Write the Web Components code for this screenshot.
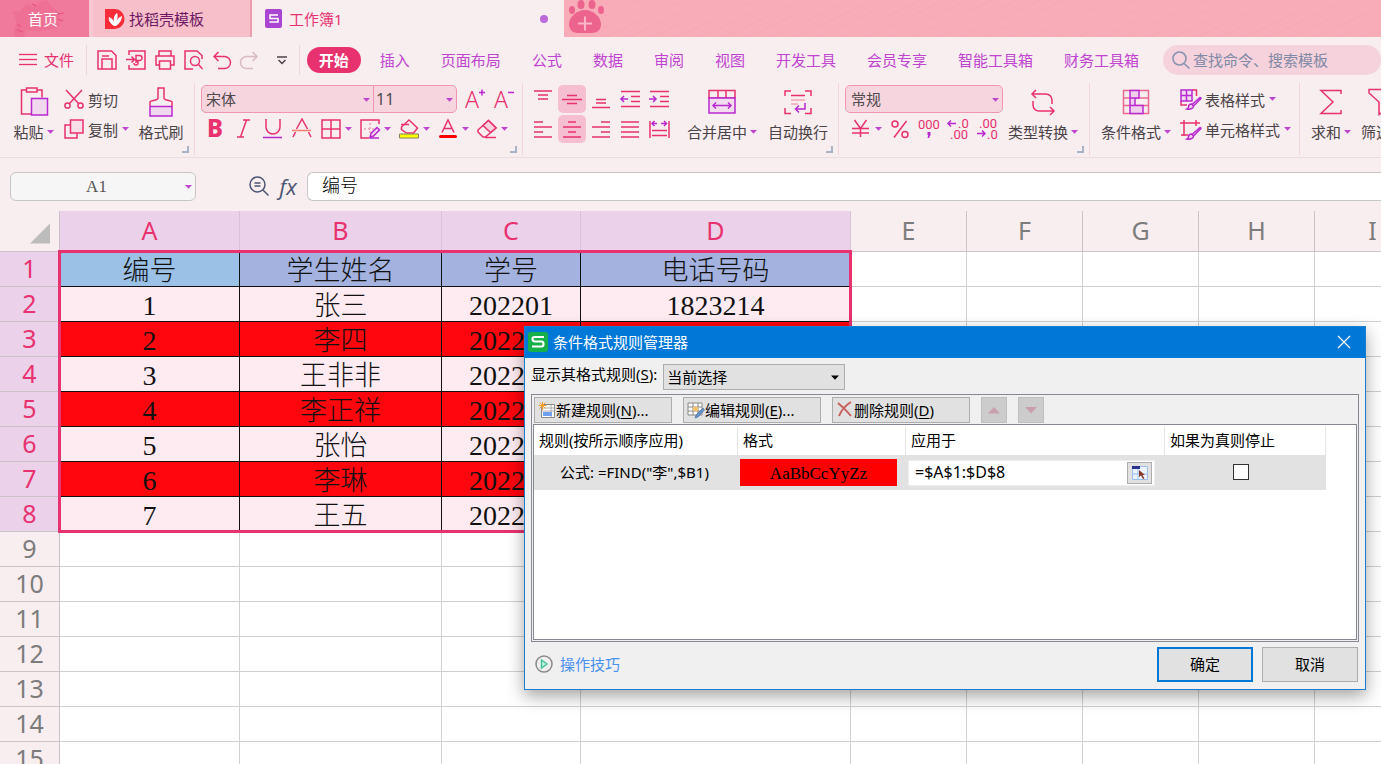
<!DOCTYPE html>
<html lang="zh-CN">
<head>
<meta charset="utf-8">
<title>工作簿1</title>
<style>
  html, body { height: 100%; }
  body { margin: 0; overflow: hidden; background: #f8edef; color: #4a4347;
    font: 15px/20px "Noto Sans", "Noto Sans CJK SC", sans-serif; }
</style>
</head>
<body>
<sheet-app></sheet-app>
<script>
const P = '#e8316f', V = '#b829cf';
const BASE = `
  *, *::before { box-sizing: border-box; }
  :host { display: block; }
  button, input, select { font: inherit; color: inherit; margin: 0; padding: 0; border: 0; background: none; border-radius: 0; }
  button { cursor: pointer; white-space: nowrap; }
  select { appearance: none; }
  a { text-decoration: none; }
  u { text-underline-offset: 2px; }
`;
function define(name, css, html) {
  const tpl = document.createElement('template');
  tpl.innerHTML = `<style>${BASE}${css}</style>${html}`;
  customElements.define(name, class extends HTMLElement {
    constructor() {
      super();
      this.attachShadow({ mode: 'open' }).append(tpl.content.cloneNode(true));
    }
  });
}

/* Icon set: [width, height, markup]. Default stroke is the accent pink. */
const lines = (...l) => l.map(([x1, x2, y]) => `<path d="M${x1} ${y}H${x2}"/>`).join('');
const v = s => `<g stroke="${V}">${s}</g>`;
const glyph = (s, x, y, size, extra = '') => `<text x="${x}" y="${y}" font-size="${size}" stroke="none" fill="${P}" ${extra}>${s}</text>`;
const brush = `<path d="M20 8.500l-8 7 1.500 1.500L21 9.500c0-1-.5-1-1-1z" fill="#f3d3ee"/><path d="M11.500 15c-2 0-3 1-3 3 0 1-.5 1.500-1.500 2 3 .5 6.500 0 6.500-3z" fill="#f3d3ee"/>`;
const ICONS = {
  caret: [7, 4, `<path d="M0 0h7L3.500 3.800z" fill="#c044d0" stroke="none"/>`],
  darkcaret: [8, 5, `<path d="M0 .5h8L4 4.800z" fill="#000" stroke="none"/>`],
  menu: [18, 14, `<g stroke-width="1.300">${lines([0, 18, 1.5], [0, 18, 6.5], [0, 18, 11.5])}</g>`],
  save: [20, 20, `<path d="M1 1h13.500L19 5.500V19H1zM5 19V9h10v10M5 6h7"/>`],
  exportpdf: [20, 20, `<path d="M3 5V1h16v18H3v-4M0 9.500h8M5.500 6.500l3 3-3 3M10 13V5.500h3.500a2.500 2.500 0 010 5H10M10 11a2 2 0 11-2 2"/>`],
  print: [20, 20, `<path d="M4 6V1h12v5M4 15H1V6h18v9h-3M4.500 11h11v8h-11z"/>`],
  preview: [20, 20, `<path d="M9 19H1V1h12l5 4.500V9"/><circle cx="11" cy="11" r="4.500"/><path d="M14.500 14.500L18.500 19"/>`],
  undo: [18, 19, `<path d="M5.500 1L1 5.500 5.500 10M1 5.500h10.500a5.800 5.800 0 010 12H5"/>`],
  redo: [18, 19, `<path stroke="#d9b9c4" d="M12.500 1L17 5.500 12.500 10M17 5.500H6.500a5.800 5.800 0 000 12H13"/>`],
  more: [10, 9, `<path stroke="#4a4347" d="M0 1h10M1.500 4l3.500 3.500L8.500 4"/>`],
  search: [20, 20, `<g stroke="#8794b0" stroke-width="1.600"><circle cx="8.500" cy="8.500" r="6.500"/><path d="M13 13.500l5.500 5"/></g>`],
  paste: [28, 30, `<path d="M6 3H1.500v24H11M17 3h5v7.500M6.500 1h10.500v4H6.500z"/>${v('<path d="M11.500 11.500h16V28h-16z" fill="#f0d9ee"/>')}`],
  cut: [20, 20, `<path d="M2 1l12.500 13.500M18 1L5.500 14.500"/><circle cx="3.500" cy="16.500" r="2.600"/><circle cx="16.500" cy="16.500" r="2.600"/>`],
  copy: [20, 20, `<path d="M6.500 1h12.500v13H6.500z" fill="#f9dfe8"/><path d="M6 6H1v13h12v-4.500"/>`],
  painter: [24, 30, `<path d="M1 19v-4c0-2 8-1 8-4V1h6v10c0 3 8 2 8 4v4"/>${v('<path d="M1 19.500h22V29H1z" fill="#f0d9ee"/>')}`],
  fontup: [20, 22, glyph('A', 0, 20, 23, 'font-weight="300"') + v('<path d="M14 4.500h6M17 1.500v6"/>')],
  fontdown: [20, 22, glyph('A', 0, 20, 23, 'font-weight="300"') + v('<path d="M14 4.500h6"/>')],
  bold: [20, 22, glyph('B', 2, 19, 24, 'font-weight="800" font-family="Noto Sans"')],
  italic: [20, 22, `<path d="M9 2h7M3 19h7M12.500 2l-6 17"/>`],
  underline: [20, 22, `<path d="M3 1v8a7 7 0 0014 0V1"/>${v('<path d="M0 19.500h19"/>')}`],
  strike: [20, 22, `<path d="M4.500 11L10 1l5.500 10M3.500 14L1 19M16.500 14l2.500 5"/><path stroke="#f5806f" d="M0 12.500h19"/>`],
  borders: [20, 20, `<path d="M1 1h18v18H1zM10 1v18M1 10h18"/>`],
  drawborder: [20, 20, `<path d="M19 5V1H1v18h8"/><path stroke="#e7a1bb" stroke-dasharray="2 2" d="M10 4v12M4 10h12"/>${v('<path d="M10 18.500l1-4 6-6 2.500 2.500-6 6z" fill="#f3d3ee"/><path d="M10 19h9"/>')}`],
  fill: [20, 20, `<path d="M10 1L2.500 8v2.500l5 3.500h7l4-5zM2 5.500h8"/><path d="M.5 15h19v4H.5z" fill="#ff0" stroke="#83825c" stroke-width="1"/>`],
  fontcolor: [20, 20, `<path d="M4 13.500L10 1l6 12.500M6 9.500h8"/><path d="M2.500 17.500h15" stroke="red" stroke-width="3" stroke-linecap="round"/>`],
  eraser: [20, 20, `<path d="M1 11L11.500 1.500 19 9 8.500 18H6L1 13z"/><path d="M6 6.500l7.500 7L19 9l-7.500-7.500z" fill="#f7d2de"/><path d="M8 18.500h11"/>`],
  top: [20, 20, lines([1, 19, 2], [5, 15, 6], [5, 15, 10])],
  middle: [20, 20, lines([5, 15, 6.5], [0, 20, 10.5], [5, 15, 14.5])],
  bottom: [20, 20, lines([5, 15, 10.5], [5, 15, 14], [1, 19, 18.5])],
  outdent: [20, 20, lines([1, 20, 2.5], [11, 20, 7.5], [11, 20, 12.5], [1, 20, 17.5]) + v('<path d="M1 10h7M4 7l-3 3 3 3"/>')],
  indent: [20, 20, lines([1, 20, 2.5], [11, 20, 7.5], [11, 20, 12.5], [1, 20, 17.5]) + v('<path d="M0 10h7M4 7l3 3-3 3"/>')],
  left: [20, 20, lines([1, 10, 3], [1, 19, 8], [1, 10, 13], [1, 19, 18])],
  center: [20, 20, lines([6, 14, 3], [1, 19, 8], [6, 14, 13], [1, 19, 18])],
  right: [20, 20, lines([10, 19, 3], [1, 19, 8], [10, 19, 13], [1, 19, 18])],
  justify: [20, 20, lines([1, 19, 3], [1, 19, 8], [1, 19, 13], [1, 19, 18])],
  distribute: [20, 20, `<path d="M1 2v17M20 2v17M3 11.500h15M3 16.500h15"/>` + v('<path d="M3 4.500h5M5.500 2L3 4.500 5.500 7M12 4.500h5M15 2l2.500 2.500L15 7"/>')],
  merge: [28, 26, `<path d="M1 1.500h26V9H1zM10 1.500V9M18 1.500V9"/>${v('<path d="M1 9h26v15H1z" fill="#f3dcf0"/><path d="M5 16.500h18M8 13.500l-3 3 3 3M20 13.500l3 3-3 3"/>')}`],
  wrap: [28, 26, `<path d="M1 7V2h6M21 2h6v5M1 19v5.500h6M21 24.500h6V19M7 6.500h14"/><path stroke="#f2a5b8" d="M7 11h14M7 15h7"/>${v('<path d="M21 14v6H11.500M15 16.500L11.500 20l3.500 3.500"/>')}`],
  yen: [20, 20, `<path d="M3.500 1l6 8.500 6-8.500M9.500 9.500V18M1 9.500h17M1 14h17"/>`],
  percent: [20, 20, `<circle cx="5" cy="5" r="3"/><circle cx="15" cy="15.500" r="3"/><path d="M16.500 2L4 18.500"/>`],
  thousands: [22, 22, glyph('000', 0, 11, 13, 'font-family="Roboto"') + `<path d="M9.500 14h3v3l-1.500 3h-1.500l.8-3h-.8z" fill="${V}" stroke="none"/>`],
  moredec: [22, 22, glyph('.0', 11, 10, 13, 'font-family="Roboto"') + glyph('.00', 3, 21, 13, 'font-family="Roboto"') + v('<path d="M1 5.500h8M4 2.500l-3 3 3 3"/>')],
  lessdec: [22, 22, glyph('.00', 3, 10, 13, 'font-family="Roboto"') + glyph('.0', 11, 21, 13, 'font-family="Roboto"') + v('<path d="M1 15.500h8M6 12.500l3 3-3 3"/>')],
  convert: [26, 26, `<path d="M6 1L2 5l4 4M2 5h14a6 6 0 016 6v4M3 12v4a6 6 0 006 6h15M20 18l4 4-4 4"/>`],
  condfmt: [28, 26, `<path d="M1.500 1.500h25v23h-25zM1.500 9h25M1.500 16.500h25" stroke="#ea6a94"/>${v('<path d="M8 1.500h9V9H8zM8 9h5v7.500H8zM8 16.500h13v8H8z" fill="#f0cfec"/>')}`],
  tablestyle: [21, 21, `<path d="M12 1h4.500v6M1 12v4h6"/>${v('<path d="M1 1h11v11H1zM1 6.500h11M6.500 1v11" fill="#f3dcf0"/>' + brush)}`],
  cellstyle: [21, 21, `<path d="M4 1v16M0 4h20M16 1v6M1 16h7"/>${v(brush)}`],
  sum: [24, 26, `<path d="M22 5V1.500H2L14 13 2 24.500h20V21"/>`],
  filter: [26, 28, `<path d="M1 1.500h24V5L16 14v9l-5 3.500V14L1 5z"/>`],
  corner: [7, 7, `<path d="M6 0v6H0" stroke="#a9b3c6" stroke-width="2"/>`],
  zoomfx: [20, 20, `<g stroke="#4b5674"><circle cx="8.500" cy="8.500" r="7.500"/><path d="M14 14l5.500 5.500M5.500 7h6M5.500 10h6"/></g>`],
  docer: [20, 20, `<path d="M0 0h10a9.500 10 0 010 20H0z" fill="#fb2b38" stroke="none"/><path d="M9 17C5 14 3 11 4 8c2 1 4 2 5 5-.5-4 0-7 3-9 1 2 1 5-1 9 1-3 3-5 6-6 0 4-3 8-6 10z" fill="#fff" stroke="none"/>`],
  book: [18, 20, `<rect width="17" height="19" rx="2" fill="#aa45d3" stroke="none"/><path d="M13 6H5v3.500h8V13H4.500" stroke="#fff"/>`],
  paw: [36, 34, `<g fill="#ec638e" stroke="none"><ellipse cx="4" cy="10" rx="3" ry="4"/><ellipse cx="13" cy="4.500" rx="3.500" ry="4.500"/><ellipse cx="24" cy="4.500" rx="3.500" ry="4.500"/><ellipse cx="33" cy="10" rx="3" ry="4"/><path d="M17 10c8 0 16 7 16 14 0 6-4 9-9 9H10c-6 0-9-4-9-9 0-7 8-14 16-14z"/></g><path d="M10 23.500h14M17 16.500v14" stroke="#f8b6c6" stroke-width="2"/>`],
  cat: [64, 37, `<g fill="#ed5f8b" stroke="none" opacity=".35"><path d="M2 12l8-1 6-7 7 3 8-6 6-1 6 8c6 2 7 8 7 14s-4 7-12 8c-8 2-20 1-26-2C5 24 6 16 2 12z"/><path d="M10 20c-4 4-8 10-5 17h10c-2-5 2-8 7-9z"/></g><path d="M48 14l6-1M48 19l5 2M7 30l6 2M7 24l4 3M22 4l4 2" stroke="#e85a86"/>`],
  app: [20, 20, `<rect width="20" height="20" rx="3" fill="#16b04a" stroke="none"/><path d="M16 5H6.500Q4.500 5 4.500 7t2 2.500h7q2 0 2 2.500t-2 2.500H4" stroke="#fff" stroke-width="2.200"/>`],
  close: [12, 12, `<path d="M0 0l12 12M12 0L0 12" stroke="#fff" stroke-width="1.200"/>`],
  newrule: [18, 18, `<path d="M3.500 3.500h13v13h-13z" fill="#fff" stroke="#888" stroke-width="1"/><path d="M3.500 7h13M3.500 10h13M13 4v12" stroke="#aaa" stroke-width="1"/><path d="M5 11h9v4H5z" fill="#6fa0f0" stroke="none"/><path d="M4.500 1v8M.5 4.500h8M1.500 1.500l6 6M7.500 1.500l-6 6" stroke="#f6a02b" stroke-width="1"/>`],
  editrule: [18, 18, `<path d="M1 2h14v12H1zM1 6h14M1 10h14M6 2v12M11 2v12" fill="#fff" stroke="#888" stroke-width="1"/><path d="M6 6h5v4H6z" fill="#f7c267" stroke="none"/><path d="M16 7l-7 7-1 3 3-1 6.500-7z" fill="#5f92d0" stroke="#47688e" stroke-width=".6"/>`],
  delrule: [18, 18, `<path d="M2 2c5 4 9 8 13 13M15 1C10 4 5 10 3 15" stroke="#c8605a" stroke-width="2"/>`],
  up: [12, 7, `<path d="M6 0l6 6.500H0z" fill="#c7a0ac" stroke="none"/>`],
  down: [12, 7, `<path d="M6 6.500L12 0H0z" fill="#c7a0ac" stroke="none"/>`],
  picker: [16, 14, `<path d="M.5.500h15v13H.5z" fill="#e9f2fd" stroke="#9cc0ea" stroke-width="1"/><path d="M0 0h8v3H0z" fill="#28358f" stroke="none"/><path d="M0 8h15M6 3v10" stroke="#9cc0ea" stroke-width="1"/><path d="M7 4l6 5h-2.500l2 3.500-1.500.5-2-3.500L7 11z" fill="#8a3b2a" stroke="none"/>`],
  play: [18, 18, `<circle cx="9" cy="9" r="8" stroke="#8b8b8b"/><path d="M6.500 5l5.500 4-5.500 4z" stroke="#46c39a" fill="#c9f0e0"/>`]
};
customElements.define('ui-icon', class extends HTMLElement {
  connectedCallback() {
    if (this.shadowRoot) return;
    const [w, h, body] = ICONS[this.getAttribute('name')];
    this.attachShadow({ mode: 'open' }).innerHTML =
      `<style>:host{display:inline-flex;flex:none}svg{display:block;overflow:visible}</style>
       <svg width="${w}" height="${h}" viewBox="0 0 ${w} ${h}" fill="none" stroke="${P}" stroke-width="1.500" aria-hidden="true">${body}</svg>`;
  }
});
const icon = n => `<ui-icon name="${n}"></ui-icon>`;

/* Large ribbon command: icon above a caption. */
define('big-command', `
  :host { flex: none; }
  button { display: flex; flex-direction: column; align-items: center; gap: 5px; width: 100%; padding-top: 4px; }
  .art { height: 30px; display: flex; align-items: center; }
  .label { display: flex; align-items: center; gap: 3px; height: 20px; }
`, `<button type="button"><span class="art"><slot name="icon"></slot></span><span class="label"><slot></slot></span></button>`);
const big = (ic, label, caret, w) =>
  `<big-command style="width:${w}px"><ui-icon slot="icon" name="${ic}"></ui-icon><span>${label}</span>${caret ? icon('caret') : ''}</big-command>`;

define('doc-tabs', `
  :host { display: flex; height: 37px; color: #6f1763;
    background: repeating-linear-gradient(155deg, #f8acb8 0 9px, #f6a8b6 9px 10px); }
  button { display: flex; align-items: center; }
  .home { position: relative; width: 89px; justify-content: center; color: #fff; background: #f07a9b; padding-right: 3px; }
  .home ui-icon { position: absolute; left: 10px; top: 0; }
  .home span { position: relative; }
  .docer { width: 163px; padding-left: 16px; gap: 4px; background: linear-gradient(90deg, #f8c8d2 4px, #f6bfc9 4px); border-right: 2px solid #e99dae; }
  .book { width: 312px; padding: 0 16px 0 13px; gap: 6px; background: #f8edef; color: ${P}; }
  .dot { width: 8px; height: 8px; border-radius: 4px; background: #bd6bdc; margin-left: auto; }
  .new { padding-left: 4px; align-items: flex-start; }
`, `
  <button class="home" type="button">${icon('cat')}<span>首页</span></button>
  <button class="docer" type="button">${icon('docer')}找稻壳模板</button>
  <button class="book" type="button">${icon('book')}工作簿1<span class="dot"></span></button>
  <button class="new" type="button" aria-label="新建">${icon('paw')}</button>`);

define('menu-bar', `
  :host { display: flex; align-items: center; height: 46px; padding-left: 19px; color: #c044d0; white-space: nowrap; }
  button, label, nav { flex: none; }
  .file { display: flex; align-items: center; gap: 7px; color: ${P}; padding-right: 12px; }
  .quick { display: flex; align-items: center; gap: 9px; height: 30px; width: 214px; padding: 0 12px 0 10px;
    border: solid #f1d3dc; border-width: 0 1px; }
  .quick button { display: flex; }
  .quick button:last-child { margin-left: auto; }
  nav { display: flex; align-items: center; gap: 31px; margin-left: 7px; }
  .on { background: ${P}; color: #fff; font-weight: 700; padding: 3px 12px; border-radius: 13px; margin-right: -12px; }
  label { display: flex; align-items: center; width: 218px; height: 30px; margin-left: 24px; padding-left: 8px; gap: 2px;
    background: #f5d2dc; border-radius: 15px; }
  input { width: 170px; outline: 0; }
  input::placeholder { color: #8089a5; opacity: 1; }
`, `
  <button class="file" type="button">${icon('menu')}文件</button>
  <div class="quick">${['save', 'exportpdf', 'print', 'preview', 'undo', 'redo', 'more'].map(n => `<button type="button" aria-label="${n}">${icon(n)}</button>`).join('')}</div>
  <nav><button class="on" type="button">开始</button>${['插入', '页面布局', '公式', '数据', '审阅', '视图', '开发工具', '会员专享', '智能工具箱', '财务工具箱'].map(t => `<button type="button">${t}</button>`).join('')}</nav>
  <label>${icon('search')}<input type="search" aria-label="搜索" placeholder="查找命令、搜索模板"></label>`);

define('ribbon-group', `
  :host { position: relative; display: flex; flex: none; height: 72px; padding-left: 6px; border-right: 1px solid #f4d3dc; }
  .corner { position: absolute; right: 5px; bottom: 2px; display: flex; }
  :host([plain]) .corner { display: none; }
`, `<slot></slot><span class="corner">${icon('corner')}</span>`);

const tool = (n, on) => `<button class="tool${on ? ' on' : ''}" type="button" aria-label="${n}">${icon(n)}</button>`;
const drop = n => `<button class="drop" type="button" aria-label="${n}">${icon(n)}${icon('caret')}</button>`;
const small = (n, t, caret) => `<button class="small" type="button">${icon(n)}<span>${t}</span>${caret ? icon('caret') : ''}</button>`;
define('ribbon-bar', `
  :host { display: flex; height: 75px; overflow: hidden; border-bottom: 1px solid #eadde0; }
  .rows { display: grid; grid-template-rows: 28px 28px; gap: 2px; padding-top: 2px; align-content: start; flex: none; }
  .row { display: flex; align-items: center; }
  .tool { display: flex; align-items: center; justify-content: center; width: 28px; height: 28px; margin-right: 1px; border-radius: 5px; }
  .tool.on { background: #f5bfd1; }
  .drop { display: flex; align-items: center; gap: 4px; padding: 0 4px; height: 28px; }
  .small { display: flex; align-items: center; gap: 4px; height: 28px; }
  .small span { padding-top: 2px; }
  .combo { position: relative; height: 28px; }
  .combo select { width: 100%; height: 28px; padding-left: 5px; background: #f6d5de; border: 1px solid #f095b3; border-radius: 5px; color: #4f4a4d; }
  .combo ui-icon { position: absolute; right: 4px; top: 13px; pointer-events: none; }
  .face { width: 173px; } .face select { border-radius: 5px 0 0 5px; padding-left: 4px; }
  .size { width: 84px; margin: 0 4px 0 -1px; } .size select { border-radius: 0 5px 5px 0; padding-left: 2px; font-size: 16px; }
  .fmt { width: 158px; }
`, `
  <ribbon-group style="width:195px;padding-left:10px">
    ${big('paste', '粘贴', 1, 47)}
    <div class="rows" style="margin:0 9px 0 7px">${small('cut', '剪切')}${small('copy', '复制', 1)}</div>
    ${big('painter', '格式刷', 0, 46)}
  </ribbon-group>
  <ribbon-group style="width:328px">
    <div class="rows">
      <div class="row">
        <span class="combo face"><select aria-label="字体"><option>宋体</option></select>${icon('caret')}</span>
        <span class="combo size"><select aria-label="字号"><option>11</option></select>${icon('caret')}</span>
        ${tool('fontup')}${tool('fontdown')}
      </div>
      <div class="row">${['bold', 'italic', 'underline', 'strike'].map(n => tool(n)).join('')}${['borders', 'drawborder', 'fill', 'fontcolor', 'eraser'].map(drop).join('')}</div>
    </div>
  </ribbon-group>
  <ribbon-group style="width:316px">
    <div class="rows" style="margin-right:8px">
      <div class="row">${tool('top')}${tool('middle', 1)}${tool('bottom')}${tool('outdent')}${tool('indent')}</div>
      <div class="row">${tool('left')}${tool('center', 1)}${tool('right')}${tool('justify')}${tool('distribute')}</div>
    </div>
    ${big('merge', '合并居中', 1, 80)}${big('wrap', '自动换行', 0, 72)}
  </ribbon-group>
  <ribbon-group style="width:251px">
    <div class="rows">
      <div class="row"><span class="combo fmt"><select aria-label="数字格式"><option>常规</option></select>${icon('caret')}</span></div>
      <div class="row" style="padding-left:2px">${drop('yen')}${tool('percent')}${tool('thousands')}${tool('moredec')}${tool('lessdec')}</div>
    </div>
    ${big('convert', '类型转换', 1, 80)}
  </ribbon-group>
  <ribbon-group plain style="width:210px">
    ${big('condfmt', '条件格式', 1, 80)}
    <div class="rows" style="margin-left:4px">${small('tablestyle', '表格样式', 1)}${small('cellstyle', '单元格样式', 1)}</div>
  </ribbon-group>
  <ribbon-group plain style="width:120px">${big('sum', '求和', 1, 50)}${big('filter', '筛选', 1, 50)}</ribbon-group>`);

define('formula-bar', `
  :host { display: flex; align-items: center; height: 53px; padding: 3px 0 0 10px; font-family: "Liberation Serif", "Noto Sans CJK SC", serif; }
  input { height: 29px; border: 1px solid #c6c6c6; outline: 0; }
  .name { position: relative; display: flex; width: 186px; margin-right: 53px; }
  .name input { width: 100%; border-radius: 6px; background: #f7f6f7; text-align: center; padding: 2px 13px 0 0; font-size: 17px; color: #555; }
  .name ui-icon { position: absolute; right: 4px; top: 13px; }
  .fx { width: 38px; text-align: center; font: italic 22px/24px "Open Sans", sans-serif; color: #4b5674; }
  .text { flex: 1; min-width: 0; border-radius: 6px 0 0 6px; border-right: 0; background: #fff; padding: 0 14px 4px; font-size: 18px; font-weight: 300; color: #000; }
`, `
  <span class="name"><input aria-label="名称框" value="A1">${icon('caret')}</span>
  ${icon('zoomfx')}<span class="fx">fx</span>
  <input class="text" aria-label="编辑栏" value="编号">`);

const DATA = [['编号', '学生姓名', '学号', '电话号码'], ['1', '张三', '202201', '1823214'], ['2', '李四', '202202', ''],
  ['3', '王非非', '202203', ''], ['4', '李正祥', '202204', ''], ['5', '张怡', '202205', ''],
  ['6', '李琳', '202206', ''], ['7', '王五', '202207', '']];
const COLS = 'ABCDEFGHI'.split('');
define('sheet-grid', `
  :host { position: relative; overflow: hidden; flex: 1; min-height: 0; background: #fff; }
  table { table-layout: fixed; width: 1431px; border-collapse: separate; border-spacing: 0; }
  th, td { padding: 0; border: solid #d0d0d0; border-width: 0 1px 1px 0; text-align: center; overflow: hidden; white-space: nowrap; }
  th { font: 25px/30px "Noto Sans", sans-serif; color: #7c7c7c; background: #f8edef; border-color: #c9c3c5; padding-bottom: 2px; }
  tr { height: 35px; }
  thead tr { height: 41px; }
  th.sel { color: ${P}; background: #ebd1ea; border-right-color: #d9c2d8; }
  td { font: 300 27px/30px "Liberation Serif", "Noto Sans CJK SC", serif; color: #111; padding-top: 4px; }
  td.num { font-size: 28px; }
  td.d { background: #feebf1; border-color: #101010; }
  .head td.d { background: #a3b2de; } .head td.d:nth-child(2) { background: #9bc2e6; }
  .hit td.d { background: #ff050d; }
  .tri { display: block; margin: 7px 9px 0 auto; width: 20px; height: 20px; background: #bcbcbc; clip-path: polygon(100% 0, 100% 100%, 0 100%); }
  .range { position: absolute; left: 58px; top: 39px; width: 794px; height: 283px; border: 3px solid ${P}; }
`, `
  <table>
    <colgroup>${[60, 180, 202, 139, 270, 116, 116, 116, 116, 116].map(w => `<col style="width:${w}px">`).join('')}</colgroup>
    <thead><tr><th><span class="tri"></span></th>${COLS.map((c, i) => `<th${i < 4 ? ' class="sel"' : ''}>${c}</th>`).join('')}</tr></thead>
    <tbody>${Array.from({ length: 15 }, (_, r) => `<tr class="${r === 0 ? 'head' : DATA[r] && DATA[r][1][0] === '李' ? 'hit' : ''}"><th${r < 8 ? ' class="sel"' : ''}>${r + 1}</th>${COLS.map((_, c) =>
      DATA[r] && c < 4 ? `<td class="d${r && c !== 1 ? ' num' : ''}">${DATA[r][c]}</td>` : '<td></td>').join('')}</tr>`).join('')}</tbody>
  </table>
  <div class="range"></div>`);

define('rule-dialog', `
  :host { position: absolute; right: 15px; top: 326px; width: 842px; color: #000; background: #f0f0f0; border: 1px solid #1a7fd0;
    box-shadow: 0 6px 16px rgba(0,0,0,.36); }
  header { display: flex; align-items: center; height: 31px; padding: 0 15px 2px 3px; gap: 5px; background: #0078d7; color: #fff; }
  header button { margin-left: auto; display: flex; }
  .scope { display: flex; height: 36px; padding: 6px 6px 4px; gap: 6px; }
  .scope label { line-height: 20px; }
  .combo { position: relative; }
  .combo select { display: block; width: 182px; height: 26px; padding-left: 3px; background: #e1e1e1; border: 1px solid #adadad; }
  .combo ui-icon { position: absolute; right: 6px; top: 11px; pointer-events: none; }
  .frame { margin: 0 6px; border: 1px solid #868993; padding: 2px 1px 1px; height: 248px; display: flex; flex-direction: column; }
  .bar { display: flex; gap: 11px; padding: 0 1px; margin-bottom: 1px; }
  .bar button { display: flex; align-items: center; width: 138px; height: 26px; padding-left: 3px; background: #e1e1e1; border: 1px solid #adadad; }
  .bar button:disabled { width: 26px; padding: 0; justify-content: center; background: #ccc; border-color: #bfbfbf; }
  .list { flex: 1; border: 1px solid #828790; background: #fff; padding-top: 1px; }
  table { table-layout: fixed; width: 792px; border-collapse: separate; border-spacing: 0; }
  th, td { padding: 0; text-align: left; font-weight: 400; white-space: nowrap; }
  th { height: 29px; padding: 0 0 2px 5px; border-right: 1px solid #e5e5e5; }
  td { height: 35px; background: #e2e2e2; }
  td:first-child { padding: 0 0 2px 26px; }
  .sample { width: 157px; height: 27px; margin-left: 2px; background: #f00; text-align: center; font: 17px/30px "Liberation Serif", serif; }
  .ref { display: flex; align-items: center; width: 247px; height: 26px; margin-left: 2px; padding-right: 2px; background: #fff; border: 1px solid #eee; }
  .ref input { flex: 1; min-width: 0; height: 24px; padding: 0 0 2px 6px; outline: 0; font-size: 16px; }
  .ref button { display: flex; align-items: center; justify-content: center; width: 25px; height: 22px; background: #e1e1e1; border: 1px solid #adadad; }
  .stop { padding: 0 9px 2px 0; }
  .stop input { appearance: none; display: block; width: 16px; height: 16px; margin: 0 auto; background: #fff; border: 1px solid #333; }
  footer { display: flex; align-items: center; gap: 9px; padding: 5px 7px 7px 10px; }
  footer a { display: flex; align-items: center; gap: 7px; color: #4a90f0; margin-right: auto; padding-bottom: 2px; }
  footer button { width: 96px; height: 35px; background: #e1e1e1; border: 1px solid #adadad; padding-bottom: 2px; }
  footer .ok { border: 2px solid #0078d7; }
`, `
  <header>${icon('app')}<span>条件格式规则管理器</span><button type="button" aria-label="关闭">${icon('close')}</button></header>
  <div class="scope"><label for="scope">显示其格式规则(<u>S</u>):</label><span class="combo"><select id="scope"><option>当前选择</option></select>${icon('darkcaret')}</span></div>
  <div class="frame">
    <div class="bar">
      <button type="button">${icon('newrule')}<span>新建规则(<u>N</u>)...</span></button>
      <button type="button">${icon('editrule')}<span>编辑规则(<u>E</u>)...</span></button>
      <button type="button">${icon('delrule')}<span>删除规则(<u>D</u>)</span></button>
      <button type="button" disabled aria-label="上移">${icon('up')}</button>
      <button type="button" disabled aria-label="下移">${icon('down')}</button>
    </div>
    <div class="list">
      <table>
        <colgroup><col style="width:204px"><col style="width:168px"><col style="width:259px"><col></colgroup>
        <thead><tr><th>规则(按所示顺序应用)</th><th>格式</th><th>应用于</th><th>如果为真则停止</th></tr></thead>
        <tbody><tr><td>公式: =FIND("李",$B1)</td><td><div class="sample">AaBbCcYyZz</div></td>
          <td><div class="ref"><input aria-label="应用于" value="=$A$1:$D$8"><button type="button" aria-label="选择区域">${icon('picker')}</button></div></td>
          <td class="stop"><input type="checkbox" aria-label="如果为真则停止"></td></tr></tbody>
      </table>
    </div>
  </div>
  <footer><a href="#tips">${icon('play')}操作技巧</a><button class="ok" type="button">确定</button><button type="button">取消</button></footer>`);

define('sheet-app', `
  :host { position: relative; display: flex; flex-direction: column; height: 100vh; overflow: hidden; }
  doc-tabs, menu-bar, ribbon-bar, formula-bar { flex: none; }
`, `<doc-tabs></doc-tabs><menu-bar></menu-bar><ribbon-bar></ribbon-bar><formula-bar></formula-bar><sheet-grid></sheet-grid><rule-dialog></rule-dialog>`);
</script>
</body>
</html>
